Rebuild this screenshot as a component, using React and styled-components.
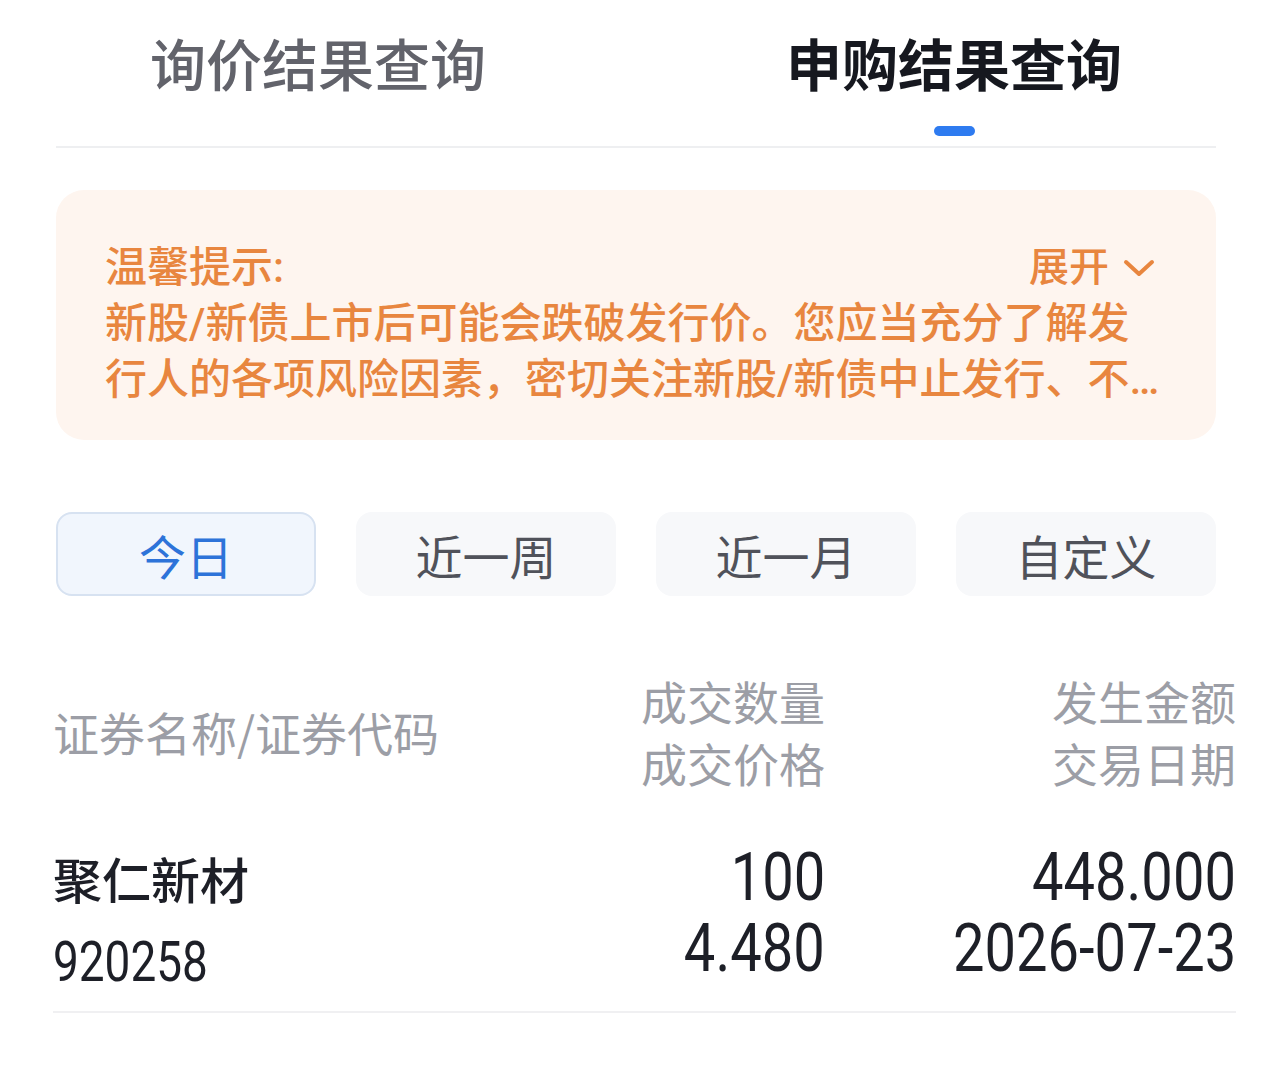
import styled, { createGlobalStyle } from "styled-components";

const GlobalStyle = createGlobalStyle`
    body{
        margin: 0;
        background: #FFFFFF;
        font-family: "Noto Sans CJK SC", "Noto Sans", sans-serif;
    }
`;

const periods = ["今日", "近一周", "近一月", "自定义"];

const rows = [
    { name: "聚仁新材", code: "920258", qty: "100", price: "4.480", amount: "448.000", date: "2026-07-23" }
];

function Chevron(){
    return(
        <svg width="32" height="20" viewBox="0 0 32 20">
            <polyline points="3,4 16,16 29,4" fill="none" stroke="#E8863F" strokeWidth="4" strokeLinecap="round" strokeLinejoin="round"/>
        </svg>
    );
}

export default function App(){
    return(
        <>
        <GlobalStyle/>
        <TABBAR>
            <TAB>
                <TABLABEL>询价结果查询</TABLABEL>
            </TAB>
            <TAB>
                <TABLABEL active>申购结果查询</TABLABEL>
                <INDICATOR/>
            </TAB>
        </TABBAR>
        <PAGE>
            <DIVIDER/>
            <NOTICE>
                <NOTICETOP>
                    <span>温馨提示:</span>
                    <EXPAND>展开<Chevron/></EXPAND>
                </NOTICETOP>
                <NOTICETEXT>新股/新债上市后可能会跌破发行价。您应当充分了解发行人的各项风险因素，密切关注新股/新债中止发行、不能按期上市或上市后表现不及预期等风险，审慎参与申购。</NOTICETEXT>
            </NOTICE>
            <PERIODS>
                {periods.map((p, index) => <PERIOD key={p} active={index === 0}>{p}</PERIOD>)}
            </PERIODS>
        </PAGE>
        <TABLE>
            <HEADROW>
                <HEADCELL>证券名称/证券代码</HEADCELL>
                <HEADCELL right><p>成交数量</p><p>成交价格</p></HEADCELL>
                <HEADCELL right><p>发生金额</p><p>交易日期</p></HEADCELL>
            </HEADROW>
            {rows.map(row => (
                <ROW key={row.code}>
                    <NAMECELL>
                        <p>{row.name}</p>
                        <p><CODE>{row.code}</CODE></p>
                    </NAMECELL>
                    <NUMCELL>
                        <p><NUM>{row.qty}</NUM></p>
                        <p><NUM>{row.price}</NUM></p>
                    </NUMCELL>
                    <NUMCELL>
                        <p><NUM>{row.amount}</NUM></p>
                        <p><NUM>{row.date}</NUM></p>
                    </NUMCELL>
                </ROW>
            ))}
        </TABLE>
        </>
    );
}

const TABBAR = styled.div`
    display: grid;
    grid-template-columns: 1fr 1fr;
    height: 146px;
`;
const TAB = styled.div`
    display: flex;
    flex-direction: column;
    align-items: center;
    padding-top: 22px;
`;
const TABLABEL = styled.div`
    font-size: 56px;
    line-height: 80px;
    font-weight: ${props => props.active ? 700 : 500};
    color: ${props => props.active ? "#16181F" : "#62636B"};
`;
const INDICATOR = styled.div`
    width: 41px;
    height: 10px;
    margin-top: 24px;
    border-radius: 5px;
    background-color: #2E7BF0;
`;
const PAGE = styled.div`
    padding: 0 56px;
`;
const DIVIDER = styled.div`
    height: 2px;
    background-color: #EEEFF1;
`;
const NOTICE = styled.div`
    margin-top: 42px;
    padding: 50px 61px 32px 49px;
    border-radius: 28px;
    background-color: #FEF5EF;
    color: #E8863F;
    font-family: "Roboto", "Noto Sans CJK SC", sans-serif;
    font-size: 42px;
    font-weight: 500;
    line-height: 56px;
`;
const NOTICETOP = styled.div`
    display: flex;
    justify-content: space-between;
    align-items: center;
`;
const EXPAND = styled.div`
    display: flex;
    align-items: center;
    gap: 14px;
    font-size: 40px;
`;
const NOTICETEXT = styled.div`
    width: 1060px;
    display: -webkit-box;
    -webkit-line-clamp: 2;
    -webkit-box-orient: vertical;
    overflow: hidden;
`;
const PERIODS = styled.div`
    display: grid;
    grid-template-columns: repeat(4, 1fr);
    column-gap: 40px;
    margin-top: 72px;
`;
const PERIOD = styled.div`
    display: flex;
    align-items: center;
    justify-content: center;
    height: 84px;
    box-sizing: border-box;
    border-radius: 16px;
    border: 2px solid ${props => props.active ? "#D7E2F1" : "#F7F8FA"};
    background-color: ${props => props.active ? "#F1F6FD" : "#F7F8FA"};
    color: ${props => props.active ? "#2D73D9" : "#50525A"};
    font-size: 47px;
`;
const TABLE = styled.div`
    padding: 73px 36px 0 53px;
`;
const HEADROW = styled.div`
    display: grid;
    grid-template-columns: 1fr 300px 411px;
    align-items: center;
`;
const HEADCELL = styled.div`
    color: #9C9EA6;
    font-size: 46px;
    line-height: 62px;
    text-align: ${props => props.right ? "right" : "left"};
    p{
        margin: 0;
    }
`;
const ROW = styled.div`
    display: grid;
    grid-template-columns: 1fr 300px 411px;
    margin-top: 44px;
    padding-bottom: 8px;
    border-bottom: 2px solid #F0F0F2;
    color: #1D1F27;
    p{
        margin: 0;
    }
`;
const NAMECELL = styled.div`
    font-size: 49px;
    line-height: 82px;
    font-weight: 500;
`;
// condensed digits, squeezed horizontally from the row's text edge
const CODE = styled.span`
    display: inline-block;
    font-family: "Roboto", sans-serif;
    font-size: 56px;
    font-weight: 400;
    transform: scaleX(0.82);
    transform-origin: left center;
`;
const NUMCELL = styled.div`
    padding-top: 5px;
    text-align: right;
    font-family: "Roboto", sans-serif;
    font-size: 66px;
    line-height: 71px;
`;
const NUM = styled.span`
    display: inline-block;
    transform: scaleX(0.85);
    transform-origin: right center;
`;
